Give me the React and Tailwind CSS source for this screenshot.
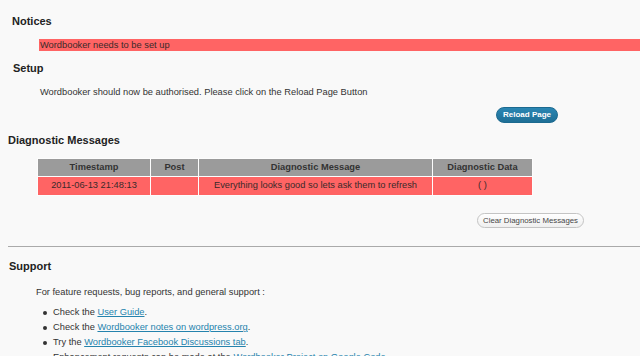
import React from 'react';

const rows = [
  { time: '2011-06-13 21:48:13', post: '', message: 'Everything looks good so lets ask them to refresh', data: '( )' },
];

function Heading({ className = '', children }) {
  return <h2 className={`font-bold text-[11px] leading-[13px] text-[#222] ${className}`}>{children}</h2>;
}

function Link({ children }) {
  return <a href="#" className="text-[#2583ad] underline">{children}</a>;
}

export default function App() {
  return (
    <div className="h-[356px] overflow-hidden bg-[#f9f9f9] text-[#333] text-[9.3px] font-['Liberation_Sans',Arial,sans-serif]">
      {/* Notices */}
      <Heading className="pt-[15px] pl-[12px]">Notices</Heading>
      <div className="mt-[11px] ml-[39px] h-[12px] leading-[12px] bg-[#ff6464] pl-[1px] text-[#3a2a2a]">
        Wordbooker needs to be set up
      </div>

      {/* Setup */}
      <Heading className="mt-[11px] pl-[13px]">Setup</Heading>
      <p className="mt-[11px] pl-[40px] leading-[12px]">
        Wordbooker should now be authorised. Please click on the Reload Page Button
      </p>
      <div className="mt-[9px] w-[558px] flex justify-end">
        <button className="h-[16px] w-[62px] rounded-full bg-gradient-to-b from-[#2a86b3] to-[#1f6f96] border border-[#1c6a90] text-white font-bold text-[8px] leading-[14px]">
          Reload Page
        </button>
      </div>

      {/* Diagnostic Messages */}
      <Heading className="mt-[11px] pl-[8px]">Diagnostic Messages</Heading>
      <table className="mt-[11px] ml-[37px] w-[496px] border-separate border-spacing-[1px] bg-[#fdfdfd] text-center">
        <thead>
          <tr className="bg-[#9b9b9b] font-bold text-[#333] h-[17px]">
            <th className="w-[112px] font-bold">Timestamp</th>
            <th className="w-[47px] font-bold">Post</th>
            <th className="w-[233px] font-bold">Diagnostic Message</th>
            <th className="font-bold">Diagnostic Data</th>
          </tr>
        </thead>
        <tbody>
          {rows.map((r) => (
            <tr key={r.time} className="bg-[#ff6464] h-[18px] text-[#3a2a2a]">
              <td>{r.time}</td>
              <td>{r.post}</td>
              <td>{r.message}</td>
              <td>{r.data}</td>
            </tr>
          ))}
        </tbody>
      </table>
      <div className="mt-[17px] w-[584px] flex justify-end">
        <button className="h-[15px] w-[107px] rounded-full border border-[#c4c4c4] bg-gradient-to-b from-white to-[#efefef] text-[#464646] text-[7.8px] leading-[13px]">
          Clear Diagnostic Messages
        </button>
      </div>

      <hr className="mt-[18px] ml-[8px] border-0 border-t border-[#aaa]" />

      {/* Support */}
      <Heading className="mt-[13px] pl-[9px]">Support</Heading>
      <p className="mt-[13px] pl-[36px] leading-[12px]">
        For feature requests, bug reports, and general support :
      </p>
      <ul className="mt-[7px] leading-[15px]">
        <li className="flex items-center">
          <span className="ml-[43px] mr-[6px] w-[4px] h-[4px] rounded-full bg-[#333]"></span>
          <span>Check the <Link>User Guide</Link>.</span>
        </li>
        <li className="flex items-center">
          <span className="ml-[43px] mr-[6px] w-[4px] h-[4px] rounded-full bg-[#333]"></span>
          <span>Check the <Link>Wordbooker notes on wordpress.org</Link>.</span>
        </li>
        <li className="flex items-center">
          <span className="ml-[43px] mr-[6px] w-[4px] h-[4px] rounded-full bg-[#333]"></span>
          <span>Try the <Link>Wordbooker Facebook Discussions tab</Link>.</span>
        </li>
        <li className="flex items-center">
          <span className="ml-[43px] mr-[6px] w-[4px] h-[4px] rounded-full bg-[#333]"></span>
          <span>Enhancement requests can be made at the <Link>Wordbooker Project on Google Code</Link>.</span>
        </li>
      </ul>
    </div>
  );
}
